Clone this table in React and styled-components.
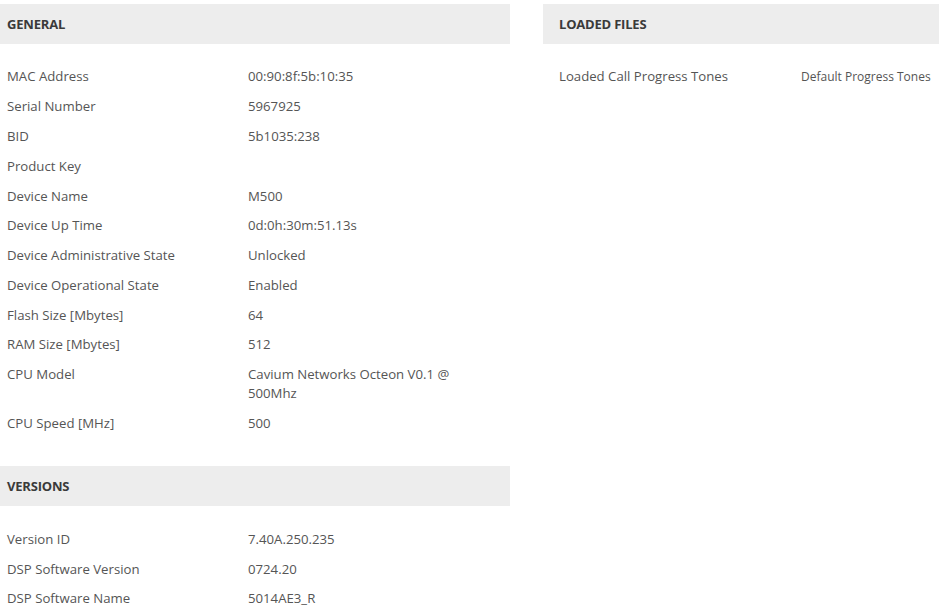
import styled, { createGlobalStyle } from "styled-components";

const Global = createGlobalStyle`
    body {
        margin: 0;
        background: #fff;
        font-family: "Open Sans", "Noto Sans", sans-serif;
        font-size: 13px;
        color: #555;
    }
`

const Page = styled.div`
    display: flex;
    gap: 33px;
    padding-top: 4px;
    width: 939px;
    overflow: hidden;
`

const Column = styled.div`
    width: ${p => p.width || "auto"};
    flex: ${p => p.grow ? 1 : "none"};
    display: flex;
    flex-direction: column;
`

const Panel = styled.div`
    margin-bottom: 28px;
`

const Header = styled.div`
    height: 40px;
    background: #ededed;
    display: flex;
    align-items: center;
    padding-left: ${p => p.pad || 7}px;
    font-weight: 700;
    font-size: 13px;
    color: #3a3a3a;
    letter-spacing: -0.2px;
`

const Rows = styled.div`
    padding-top: 18px;
`

const Row = styled.div`
    display: flex;
    padding: 5.4px 0;
    line-height: 19px;
    padding-left: ${p => p.pad || 7}px;
    font-size: 13.2px;
`

const Label = styled.div`
    width: ${p => p.width || 241}px;
    flex: none;
`

const Value = styled.div`
    width: ${p => p.width || 215}px;
    font-size: ${p => p.small ? "12px" : "inherit"};
`

const general = [
    ["MAC Address", "00:90:8f:5b:10:35"],
    ["Serial Number", "5967925"],
    ["BID", "5b1035:238"],
    ["Product Key", ""],
    ["Device Name", "M500"],
    ["Device Up Time", "0d:0h:30m:51.13s"],
    ["Device Administrative State", "Unlocked"],
    ["Device Operational State", "Enabled"],
    ["Flash Size [Mbytes]", "64"],
    ["RAM Size [Mbytes]", "512"],
    ["CPU Model", "Cavium Networks Octeon V0.1 @ 500Mhz"],
    ["CPU Speed [MHz]", "500"],
]

const versions = [
    ["Version ID", "7.40A.250.235"],
    ["DSP Software Version", "0724.20"],
    ["DSP Software Name", "5014AE3_R"],
]

const App = () => {
  return (
    <>
      <Global />
      <Page>
        <Column width="510px">
            <Panel>
                <Header>GENERAL</Header>
                <Rows>
                    {general.map(([k, v]) => (
                        <Row key={k}><Label>{k}</Label><Value>{v}</Value></Row>
                    ))}
                </Rows>
            </Panel>
            <Panel>
                <Header>VERSIONS</Header>
                <Rows>
                    {versions.map(([k, v]) => (
                        <Row key={k}><Label>{k}</Label><Value>{v}</Value></Row>
                    ))}
                </Rows>
            </Panel>
        </Column>
        <Column grow>
            <Panel>
                <Header pad={16}>LOADED FILES</Header>
                <Rows>
                    <Row pad={16}>
                        <Label width={242}>Loaded Call Progress Tones</Label>
                        <Value small width={140}>Default Progress Tones</Value>
                    </Row>
                </Rows>
            </Panel>
        </Column>
      </Page>
    </>
  )
}

export default App
